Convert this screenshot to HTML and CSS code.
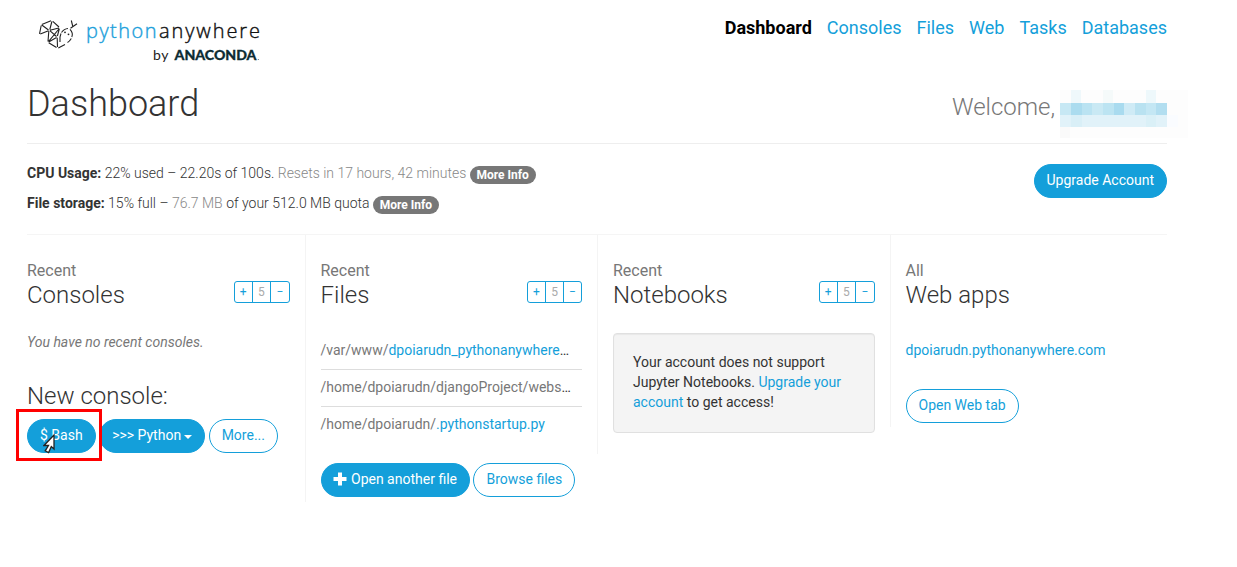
FILE: index.html
```html
<!DOCTYPE html>
<html lang="en">
<head>
<meta charset="utf-8">
<title>Dashboard</title>
<link rel="stylesheet" href="styles.css">
</head>
<body>
<div class="container">
  <header class="topbar">
    <svg class="logo" width="240" height="60" viewBox="30 10 240 60">
      <g class="snake">
        <path d="M39.500 33.800L41.200 25.500M41.800 24.500L51 20.700M52.800 21.300L59 27M40.300 34L48.500 30.700M41.800 25L48.500 30M51.900 21.500L49.800 29.500M50 30.200L58.800 28M48.800 31.200L48 41.500M59.300 28.500L48.700 41.300M59.300 28.800L57.400 36M49.800 30.700L56.500 36.500M48.700 42L56.500 37.500M48.700 42.700L56.500 47.500M57.200 37.800L57.500 47M58.300 47.900L65 44.500"/>
        <path d="M60 42Q59.300 37 61 33.500M61.500 32.500Q64 28.800 68 28.500M70 29.300Q73.500 33 71.800 37M71.300 38.500Q69.500 41.500 67.500 42.500"/>
        <path d="M70.500 28.300L77 23.700M72.800 26.500L71.300 20.500"/>
        <circle cx="65" cy="32.300" r=".9"/><circle cx="68.500" cy="34.300" r=".9"/>
      </g>
      <text class="brand" x="86" y="38.300" textLength="70.500" fill="#1d9fdb">python</text>
      <text class="brand dark" x="159" y="38.300" textLength="101">anywhere</text>
      <text class="by" x="153" y="60" textLength="15.500">by</text>
      <text class="anaconda" x="174.500" y="60.300" textLength="82" lengthAdjust="spacingAndGlyphs">ANACONDA</text>
      <circle cx="258.300" cy="59.500" r=".6" fill="#567"/>
    </svg>
    <nav class="nav">
      <a class="active">Dashboard</a><a>Consoles</a><a>Files</a><a>Web</a><a>Tasks</a><a>Databases</a>
    </nav>
  </header>

  <div class="title-row">
    <h1>Dashboard</h1>
    <div class="welcome">Welcome,
      <svg class="mosaic" width="128" height="48" viewBox="0 0 128 48" shape-rendering="crispEdges">
        <rect width="128" height="48" fill="#fdfdfd"/>
        <rect x="11" width="10" height="13" fill="#eff8fb"/><rect x="43" width="10" height="13" fill="#f5fafa"/><rect x="86" width="10" height="13" fill="#eef8fb"/>
        <rect y="13" width="11" height="12" fill="#c7e8f4"/><rect x="11" y="13" width="11" height="12" fill="#abdcef"/><rect x="22" y="13" width="10" height="12" fill="#bae3f2"/><rect x="32" y="13" width="11" height="12" fill="#c9e9f4"/><rect x="43" y="13" width="11" height="12" fill="#bce4f2"/><rect x="54" y="13" width="10" height="12" fill="#a9dbef"/><rect x="64" y="13" width="11" height="12" fill="#cfebf6"/><rect x="75" y="13" width="11" height="12" fill="#b9e2f1"/><rect x="86" y="13" width="10" height="12" fill="#c4e7f4"/><rect x="96" y="13" width="11" height="12" fill="#b2def0"/>
        <rect y="25" width="107" height="12" fill="#e1f2f9"/><rect x="11" y="25" width="11" height="12" fill="#d9eff7"/><rect x="86" y="25" width="10" height="12" fill="#daf0f7"/><rect y="25" x="107" width="11" height="12" fill="#fafcff"/>
        <rect y="37" width="10" height="11" fill="#fafafa"/>
      </svg>
    </div>
  </div>

  <section class="usage">
    <div>
      <p><b>CPU Usage:</b> 22% used – 22.20s of 100s. <span class="soft">Resets in 17 hours, 42 minutes</span> <span class="label">More Info</span></p>
      <p><b>File storage:</b> 15% full – <span class="soft">76.7 MB</span> of your 512.0 MB quota <span class="label">More Info</span></p>
    </div>
    <a class="btn solid">Upgrade Account</a>
  </section>

  <main class="columns">
    <section class="col consoles">
      <div class="col-head">
        <div><small>Recent</small><h2>Consoles</h2></div>
        <div class="stepper"><span>+</span><span class="count">5</span><span>−</span></div>
      </div>
      <p class="empty">You have no recent consoles.</p>
      <h2>New console:</h2>
      <div class="buttons">
        <a class="btn solid">$ Bash</a>
        <a class="btn solid">&gt;&gt;&gt; Python <i class="caret"></i></a>
        <a class="btn">More...</a>
        <div class="highlight"></div>
        <svg class="cursor" width="14" height="20" viewBox="0 0 14 20"><path d="M11 1V15L8.300 12.500L5.600 18.500L2.200 16.800L5.500 11.500L1 11.500Z" fill="#fff" stroke="#222" stroke-width="1.300"/></svg>
      </div>
    </section>

    <section class="col files">
      <div class="col-head">
        <div><small>Recent</small><h2>Files</h2></div>
        <div class="stepper"><span>+</span><span class="count">5</span><span>−</span></div>
      </div>
      <ul>
        <li>/var/www/<a>dpoiarudn_pythonanywhere</a><em>…</em></li>
        <li>/home/dpoiarudn/djangoProject/webs<em>…</em></li>
        <li>/home/dpoiarudn/<a>.pythonstartup.py</a></li>
      </ul>
      <div class="buttons">
        <a class="btn solid"><svg class="plus" width="14" height="14" viewBox="0 0 14 14"><path d="M5 .5H9V5H13.500V9H9V13.500H5V9H.5V5H5Z" fill="#fff"/></svg>Open another file</a>
        <a class="btn">Browse files</a>
      </div>
    </section>

    <section class="col notebooks">
      <div class="col-head">
        <div><small>Recent</small><h2>Notebooks</h2></div>
        <div class="stepper"><span>+</span><span class="count">5</span><span>−</span></div>
      </div>
      <div class="well">Your account does not support Jupyter Notebooks. <a>Upgrade your account</a> to get access!</div>
    </section>

    <section class="col webapps">
      <div class="col-head">
        <div><small>All</small><h2>Web apps</h2></div>
      </div>
      <p class="site"><a>dpoiarudn.pythonanywhere.com</a></p>
      <div class="buttons"><a class="btn">Open Web tab</a></div>
    </section>
  </main>
</div>
</body>
</html>
```
FILE: styles.css
```css
* { box-sizing: border-box; }
body {
  margin: 0;
  min-height: 567px;
  background: #fff;
  color: #333;
  font: 14px/20px Roboto, sans-serif;
}
h1, h2, p, ul { margin: 0; padding: 0; font-weight: 300; }
a { color: #149fda; }

.container { width: 1140px; margin-left: 27px; }

.topbar { display: flex; justify-content: space-between; height: 80px; padding-top: 10px; }
.logo { margin-left: 3px; }
.snake { fill: none; stroke: #222; stroke-width: 1.1; }
.snake circle { fill: #222; stroke: none; }
.brand { font: 300 20px "Open Sans", sans-serif; stroke: #1d9fdb; stroke-width: .4; }
.brand.dark { fill: #111; stroke: #111; }
.by { font: 400 14px Lato, sans-serif; fill: #222; }
.anaconda { font: 900 14px Lato, sans-serif; fill: #0d2c33; stroke: #0d2c33; stroke-width: .3; }

.nav { display: flex; gap: 15px; padding-top: 6px; font-size: 18px; line-height: 24px; }
.nav .active { color: #000; font-weight: 700; }

.title-row { display: flex; justify-content: space-between; height: 64px; border-bottom: 1px solid #eee; }
h1 { font-size: 36px; line-height: 40px; padding-top: 4px; }
.welcome {
  position: relative;
  width: 215px;
  padding-top: 12px;
  font-size: 24px;
  line-height: 30px;
  font-weight: 300;
  color: #777;
}
.mosaic { position: absolute; left: 108px; top: 10px; }

.usage { display: flex; justify-content: space-between; height: 91px; padding-top: 19px; border-bottom: 1px solid #f5f5f5; }
.usage p { height: 30px; }
.usage .btn { margin-top: 1px; }
.usage b { font-weight: 700; }
.soft { color: #888; }
.label {
  display: inline-block;
  height: 18px;
  margin-left: -.2px;
  padding: 0 7px;
  border-radius: 9px;
  background: #777;
  color: #fff;
  font-size: 12px;
  font-weight: 700;
  line-height: 18px;
  vertical-align: -1px;
}

.btn {
  display: inline-flex;
  align-items: center;
  height: 34px;
  padding: 0 12px 2px;
  border: 1px solid #149fda;
  border-radius: 17px;
  color: #149fda;
  white-space: nowrap;
}
.btn.solid { background: #149fda; color: #fff; }

.columns { display: grid; grid-template-columns: repeat(4, 292.5px); align-items: start; width: 1170px; margin-left: -15px; }
.col { min-width: 0; padding: 27px 15px 0; border-left: 1px solid #f4f4f4; }
.consoles { border-left-color: transparent; padding-left: 14px; }
.files { height: 267px; }
.notebooks { height: 219px; }
.webapps { height: 192px; }
.col-head { display: flex; justify-content: space-between; height: 71px; }
small { display: block; height: 18px; font-size: 16px; line-height: 18px; color: #777; }
h2 { font-size: 24px; line-height: 30px; }

.stepper { display: flex; width: 56px; height: 22px; margin-top: 19px; border: 1px solid #149fda; border-radius: 3px; color: #149fda; font-size: 12px; line-height: 21px; text-align: center; }
.files .stepper { width: 55px; }
.stepper span { flex: 1; }
.stepper .count { color: #aaa; border: solid #149fda; border-width: 0 1px; }

.empty { margin-top: -1px; height: 51px; font-style: italic; font-weight: 400; color: #777; }
.consoles > h2 { height: 36px; line-height: 26px; }
.buttons { position: relative; display: flex; gap: 3.5px; }
.caret { margin: 3px 0 0 3px; border: 4px solid transparent; border-top-color: #fff; border-bottom: 0; }
.highlight { position: absolute; left: -11px; top: -10px; width: 86px; height: 52px; border: 3px solid #f00; }
.cursor { position: absolute; left: 16px; top: 15px; }

ul { list-style: none; margin-bottom: 19px; font-weight: 400; color: #777; }
li { height: 37px; padding-top: 7px; border-bottom: 1px solid #ddd; white-space: nowrap; }
li:last-child { border-bottom: 0; }
em { color: #333; font-style: normal; }
.plus { margin-right: 4px; margin-left: -.5px; }

.well { height: 100px; padding: 18px 19px; border: 1px solid #e0e0e0; border-radius: 4px; background: #f4f4f4; box-shadow: inset 0 1px 1px rgba(0, 0, 0, .05); }
.site { margin-top: 7px; height: 49px; font-weight: 400; }
```
